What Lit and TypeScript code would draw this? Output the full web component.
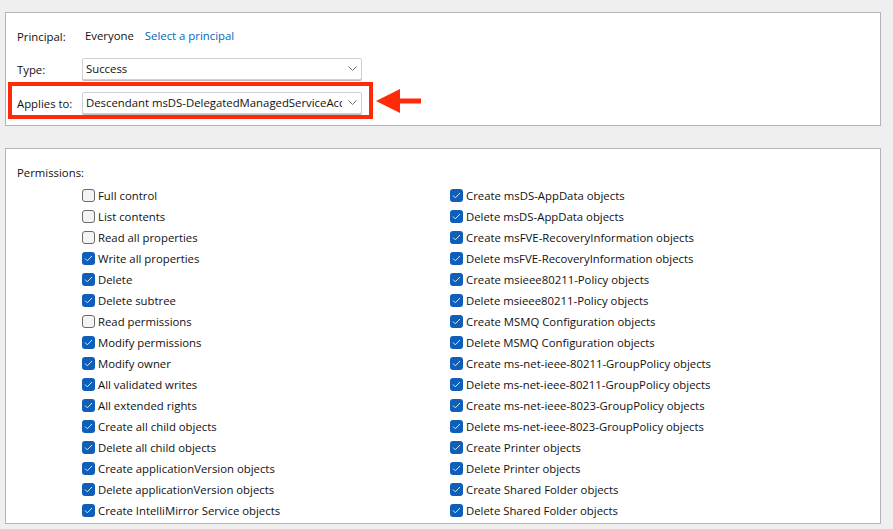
import { LitElement, html, css, svg } from "lit";
import { customElement } from "lit/decorators.js";

const left: [string, boolean][] = [
  ["Full control", false],
  ["List contents", false],
  ["Read all properties", false],
  ["Write all properties", true],
  ["Delete", true],
  ["Delete subtree", true],
  ["Read permissions", false],
  ["Modify permissions", true],
  ["Modify owner", true],
  ["All validated writes", true],
  ["All extended rights", true],
  ["Create all child objects", true],
  ["Delete all child objects", true],
  ["Create applicationVersion objects", true],
  ["Delete applicationVersion objects", true],
  ["Create IntelliMirror Service objects", true],
];

const right = [
  "Create msDS-AppData objects",
  "Delete msDS-AppData objects",
  "Create msFVE-RecoveryInformation objects",
  "Delete msFVE-RecoveryInformation objects",
  "Create msieee80211-Policy objects",
  "Delete msieee80211-Policy objects",
  "Create MSMQ Configuration objects",
  "Delete MSMQ Configuration objects",
  "Create ms-net-ieee-80211-GroupPolicy objects",
  "Delete ms-net-ieee-80211-GroupPolicy objects",
  "Create ms-net-ieee-8023-GroupPolicy objects",
  "Delete ms-net-ieee-8023-GroupPolicy objects",
  "Create Printer objects",
  "Delete Printer objects",
  "Create Shared Folder objects",
  "Delete Shared Folder objects",
];

const chevron = svg`<path d="M.5 .5l4 4 4-4" fill="none" stroke="#707070" stroke-width="1"/>`;

@customElement("app-root")
export class AppRoot extends LitElement {
  static styles = css`
    :host {
      display: block;
      height: 529px;
      overflow: hidden;
      background: #efefef;
      font-family: "Open Sans", "Noto Sans", sans-serif;
      font-size: 11.35px;
      color: #111;
    }
    .page {
      display: flex;
      flex-direction: column;
      gap: 22px;
      padding: 12px 12px 0 5px;
    }
    .panel {
      background: #fff;
      border: 1px solid #b4b4b4;
      position: relative;
    }
    .top {
      height: 114px;
      box-sizing: border-box;
      padding: 12px 0 0 11px;
      display: grid;
      grid-template-columns: 65px 280px;
      grid-template-rows: 21px 23px 23px;
      row-gap: 11px;
      align-items: center;
      align-content: start;
    }
    .top .label {
      position: relative;
      top: 1px;
    }
    .principal {
      display: flex;
      gap: 11px;
      padding-left: 3px;
    }
    .link {
      color: #0067c0;
    }
    .select {
      height: 22px;
      box-sizing: border-box;
      border: 1px solid #d0d0d0;
      border-radius: 2px;
      display: flex;
      align-items: center;
      justify-content: space-between;
      padding: 0 3px 0 3px;
      background: #fff;
      box-shadow: 0 1px 0 #bdbdbd;
    }
    .select span {
      width: 256px;
      white-space: nowrap;
      overflow: hidden;
    }
    .select svg {
      width: 9px;
      height: 5px;
      margin-right: 1px;
    }
    .highlight {
      position: absolute;
      left: 2px;
      top: 69px;
      width: 365px;
      height: 37px;
      box-sizing: border-box;
      border: 4px solid #ff2a0a;
    }
    .arrow {
      position: absolute;
      left: 370px;
      top: 76px;
      width: 46px;
      height: 24px;
    }
    .perms {
      height: 376px;
      box-sizing: border-box;
      padding: 15px 0 0 11px;
      overflow: hidden;
    }
    .title {
      line-height: 18px;
    }
    .cols {
      display: grid;
      grid-template-columns: 368px 1fr;
      margin: 3px 0 0 65px;
    }
    .row {
      display: flex;
      align-items: center;
      gap: 3px;
      height: 21px;
      white-space: nowrap;
    }
    .box {
      width: 13px;
      height: 13px;
      box-sizing: border-box;
      border: 1px solid #6a6a6a;
      border-radius: 3px;
      background: #f4f4f4;
      flex: none;
    }
    .box.on {
      border: none;
      background: #0f5fba;
      display: flex;
      align-items: center;
      justify-content: center;
    }
    .box svg {
      width: 9px;
      height: 7px;
    }
  `;

  private renderRow(text: string, on: boolean) {
    return html`<div class="row">
      ${on
        ? html`<span class="box on"
            ><svg viewBox="0 0 9 7">
              <path d="M1 3.5l2.3 2.3L8 1" fill="none" stroke="#d8e6f6" stroke-width="1" /></svg
          ></span>`
        : html`<span class="box"></span>`}
      <span>${text}</span>
    </div>`;
  }

  render() {
    return html`<div class="page">
      <section class="panel top">
        <div class="label">Principal:</div>
        <div class="principal"><span>Everyone</span><span class="link">Select a principal</span></div>
        <div class="label">Type:</div>
        <div class="select">
          <span>Success</span><svg viewBox="0 0 9 5">${chevron}</svg>
        </div>
        <div class="label">Applies to:</div>
        <div class="select">
          <span>Descendant msDS-DelegatedManagedServiceAccount objects</span><svg viewBox="0 0 9 5">${chevron}</svg>
        </div>
        <div class="highlight"></div>
        <svg class="arrow" viewBox="0 0 46 24">
          <path d="M0 12L24 0v9.500h21v5H24v9.500z" fill="#ff2a0a" />
        </svg>
      </section>
      <section class="panel perms">
        <div class="title">Permissions:</div>
        <div class="cols">
          <div>${left.map(([t, on]) => this.renderRow(t, on))}</div>
          <div>${right.map((t) => this.renderRow(t, true))}</div>
        </div>
      </section>
    </div>`;
  }
}
